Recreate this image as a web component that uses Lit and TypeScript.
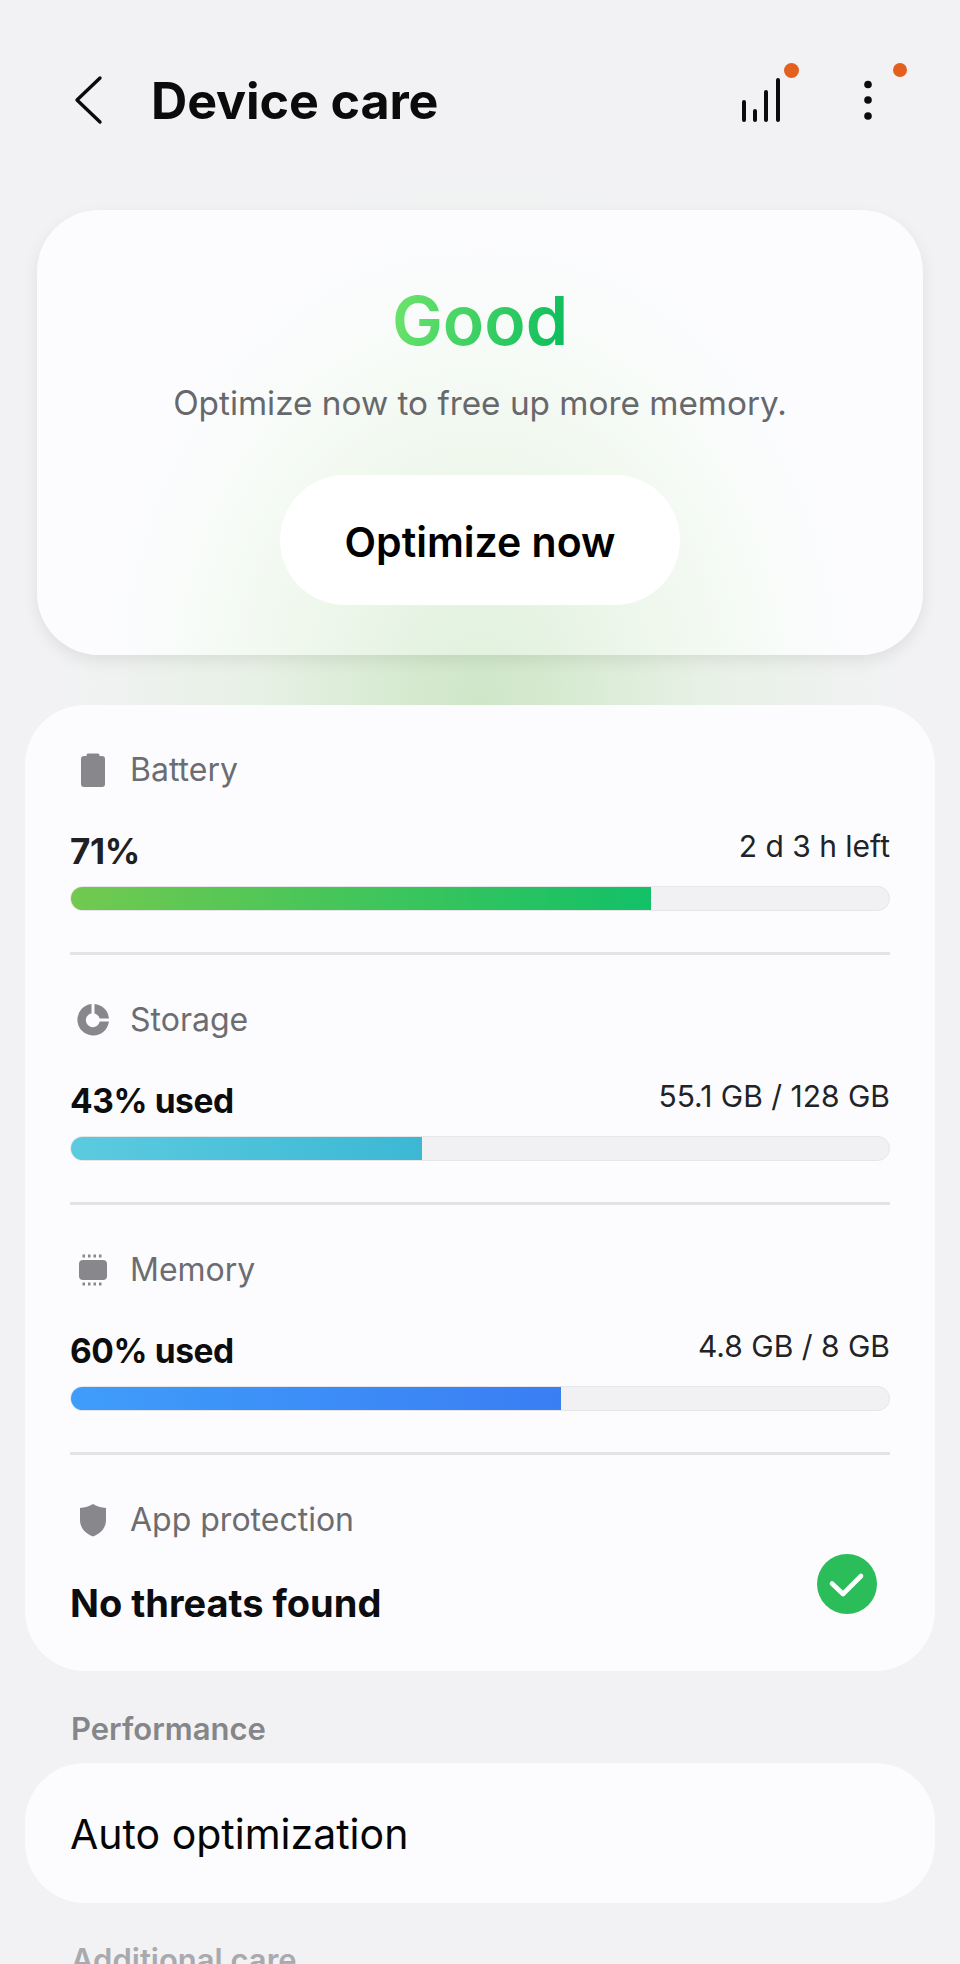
import { LitElement, html, css } from "lit";
import { customElement } from "lit/decorators.js";

const batteryIcon = html`<svg viewBox="0 0 40 40" width="40" height="40"><path fill="#88888c" d="M15 3.500h10a1.500 1.500 0 0 1 1.500 1.500v1H29a3 3 0 0 1 3 3v25a3 3 0 0 1-3 3H11a3 3 0 0 1-3-3V9a3 3 0 0 1 3-3h2.500V5A1.500 1.500 0 0 1 15 3.500z"/></svg>`;
const storageIcon = html`<svg viewBox="0 0 40 40" width="40" height="40"><path fill="#88888c" d="M18.500 4v9.300a7 7 0 1 0 8.200 8.200h9.200A15.800 15.800 0 1 1 18.500 4z"/><path fill="#88888c" d="M21.500 4a15.800 15.800 0 0 1 14.400 14.500h-9.300a7 7 0 0 0-5.100-5.100z"/></svg>`;
const memoryIcon = html`<svg viewBox="0 0 40 40" width="40" height="40"><rect x="6" y="10" width="28" height="20" rx="4" fill="#88888c"/><g fill="#88888c"><rect x="9.500" y="4.500" width="2.500" height="3"/><rect x="15" y="4.500" width="2.500" height="3"/><rect x="20.500" y="4.500" width="2.500" height="3"/><rect x="26" y="4.500" width="2.500" height="3"/><rect x="9.500" y="32.500" width="2.500" height="3"/><rect x="15" y="32.500" width="2.500" height="3"/><rect x="20.500" y="32.500" width="2.500" height="3"/><rect x="26" y="32.500" width="2.500" height="3"/></g></svg>`;
const shieldIcon = html`<svg viewBox="0 0 40 40" width="40" height="40"><path fill="#88888c" d="M20 4c3.500 2.300 8 3.600 13 4v12c0 8-5.300 13.500-13 16.500C12.300 33.500 7 28 7 20V8c5-.4 9.500-1.700 13-4z"/></svg>`;

@customElement("usage-row")
class UsageRow extends LitElement {
  static properties = {
    label: {},
    value: {},
    detail: {},
    pct: { type: Number },
    from: {},
    to: {},
    soft: { type: Boolean },
  };
  label = "";
  value = "";
  detail = "";
  pct = 0;
  from = "";
  to = "";
  static styles = css`
    :host { display: block; height: 250px; box-sizing: border-box; border-bottom: 3px solid #e4e4e7; }
    .head { display: flex; align-items: center; height: 40px; padding-top: 45px; color: #6c6d72; font-size: 32px; }
    .icon { width: 40px; height: 40px; margin: 0 17px 0 3px; flex: none; }
    .name { padding-bottom: 2px; }
    .values { display: flex; justify-content: space-between; align-items: flex-start; margin-top: 37px; height: 48px; }
    .value { font-size: 33.500px; line-height: 48px; font-weight: 700; letter-spacing: -0.4px; color: #0d0d0f; }
    .value.soft { color: #1f2023; font-size: 35px; }
    .detail { font-size: 30px; line-height: 38px; color: #222326; }
    .track { height: 25px; box-sizing: border-box; margin-top: 11px; border-radius: 13px; background: #f1f1f3; border: 1px solid #e6e6e9; overflow: hidden; }
    .fill { height: 100%; margin: -1px 0 0 -1px; padding-bottom: 2px; }
  `;
  render() {
    return html`
      <div class="head"><span class="icon"><slot></slot></span><span class="name">${this.label}</span></div>
      <div class="values"><span class="value ${(this as any).soft ? "soft" : ""}">${this.value}</span><span class="detail">${this.detail}</span></div>
      <div class="track"><div class="fill" style="width:${this.pct}%;background:linear-gradient(90deg,${this.from},${this.to})"></div></div>
    `;
  }
}

@customElement("app-root")
class AppRoot extends LitElement {
  static styles = css`
    :host { display: block; width: 960px; height: 1964px; overflow: hidden; background: #f2f2f4; font-family: Inter, "Noto Sans", sans-serif; position: relative; }
    .glow { position: absolute; left: 60px; top: 170px; width: 840px; height: 560px; background: radial-gradient(ellipse 50% 95% at 50% 95%, #cfe6c8 0%, #d9ebd4 25%, #e8f1e6 55%, #f2f2f4 100%); }
    .page { position: relative; }
    .header { display: flex; align-items: center; height: 200px; padding-left: 70px; box-sizing: border-box; }
    .back { width: 40px; height: 56px; flex: none; }
    .title { margin-left: 41px; font-size: 50.200px; font-weight: 700; letter-spacing: -0.1px; color: #0b0b0c; }
    .actions { margin-left: auto; display: flex; }
    .act { position: relative; display: block; }
    .sig { width: 50px; height: 50px; }
    .keb { width: 20px; height: 50px; margin-left: 72px; margin-right: 82px; }
    .dot { position: absolute; border-radius: 50%; background: #e4601e; }
    .sig .dot { width: 15px; height: 15px; left: 48px; top: -12px; }
    .keb .dot { width: 14px; height: 14px; left: 35px; top: -12px; }
    svg { display: block; }
    .hero { margin: 10px 37px 0; height: 445px; border-radius: 62px; background: radial-gradient(ellipse 375px 470px at 50% 490px, #e0f1dc 0%, #e8f4e5 28%, #f0f8ee 52%, #f7fbf7 76%, #fcfcfe 100%); box-shadow: 0 6px 16px rgba(0,0,0,.08); display: flex; flex-direction: column; align-items: center; }
    .good { margin-top: 64px; font-size: 68px; line-height: 92px; font-weight: 600; background: linear-gradient(105deg, #72e56c, #07bb5c); -webkit-background-clip: text; background-clip: text; color: transparent; }
    .sub { margin-top: 15px; font-size: 33.300px; line-height: 44px; color: #67686c; }
    .btn { margin-top: 50px; width: 400px; height: 130px; box-sizing: border-box; border-radius: 65px; background: #fff; display: flex; align-items: center; justify-content: center; font-size: 41px; font-weight: 600; padding-top: 4px; color: #000; }
    .card { margin: 50px 25px 0; padding: 0 45px; border-radius: 60px; background: #fcfcfe; }
    .usage { height: 966px; box-sizing: border-box; }
    .protect { position: relative; }
    .prow { display: flex; align-items: center; justify-content: space-between; height: 40px; padding-top: 45px; }
    .phead { display: flex; align-items: center; color: #6c6d72; font-size: 32px; }
    .phead svg { margin: 0 17px 0 3px; }
    .phead span { padding-bottom: 2px; }
    .threats { margin-top: 40px; font-size: 38px; font-weight: 700; color: #0d0d0f; }
    .check { position: absolute; right: 13px; top: 99px; }
    .sect { margin: 40px 0 0 71px; font-size: 31px; line-height: 36px; font-weight: 600; color: #85868a; }
    .auto { margin: 16px 25px 0; height: 140px; padding: 2px 46px 0 45px; border-radius: 60px; background: #fcfcfe; display: flex; align-items: center; font-size: 41px; color: #050506; box-sizing: border-box; }
    .sect.faded { margin-top: 39px; color: #a9aaad; }
  `;
  render() {
    return html`
      <div class="glow"></div>
      <div class="page">
        <div class="header">
          <svg class="back" viewBox="0 0 40 56"><path d="M30 6 L7 28 L30 50" fill="none" stroke="#0b0b0c" stroke-width="3.400" stroke-linecap="round" stroke-linejoin="round"/></svg>
          <div class="title">Device care</div>
          <div class="actions">
            <div class="act sig">
              <svg viewBox="0 0 50 50" width="50" height="50"><g stroke="#0b0b0c" stroke-width="4" stroke-linecap="round"><path d="M8 27v18M19 36v9M30 17v28M42 5v40"/></g></svg>
              <span class="dot"></span>
            </div>
            <div class="act keb">
              <svg viewBox="0 0 20 50" width="20" height="50"><g fill="#0b0b0c"><circle cx="10" cy="9.500" r="3.800"/><circle cx="10" cy="25" r="3.800"/><circle cx="10" cy="41" r="3.800"/></g></svg>
              <span class="dot"></span>
            </div>
          </div>
        </div>
        <div class="hero">
          <div class="good">Good</div>
          <div class="sub">Optimize now to free up more memory.</div>
          <div class="btn">Optimize now</div>
        </div>
        <div class="card usage">
          <usage-row label="Battery" value="71%" detail="2 d 3 h left" pct="71" from="#72c94f" to="#12c167" soft>${batteryIcon}</usage-row>
          <usage-row label="Storage" value="43% used" detail="55.1 GB / 128 GB" pct="43" from="#5ccbe0" to="#3cb8d4">${storageIcon}</usage-row>
          <usage-row label="Memory" value="60% used" detail="4.8 GB / 8 GB" pct="60" from="#3f9dfa" to="#3a7ef4">${memoryIcon}</usage-row>
          <div class="protect">
            <div class="prow"><div class="phead">${shieldIcon}<span>App protection</span></div></div>
            <div class="threats">No threats found</div>
            <svg class="check" viewBox="0 0 60 60" width="60" height="60"><circle cx="30" cy="30" r="30" fill="#2bbd5a"/><path d="M15 29.500 L26 40 L44 22" fill="none" stroke="#fff" stroke-width="4.600" stroke-linecap="round" stroke-linejoin="round"/></svg>
          </div>
        </div>
        <div class="sect">Performance</div>
        <div class="auto">Auto optimization</div>
        <div class="sect faded">Additional care</div>
      </div>
    `;
  }
}
